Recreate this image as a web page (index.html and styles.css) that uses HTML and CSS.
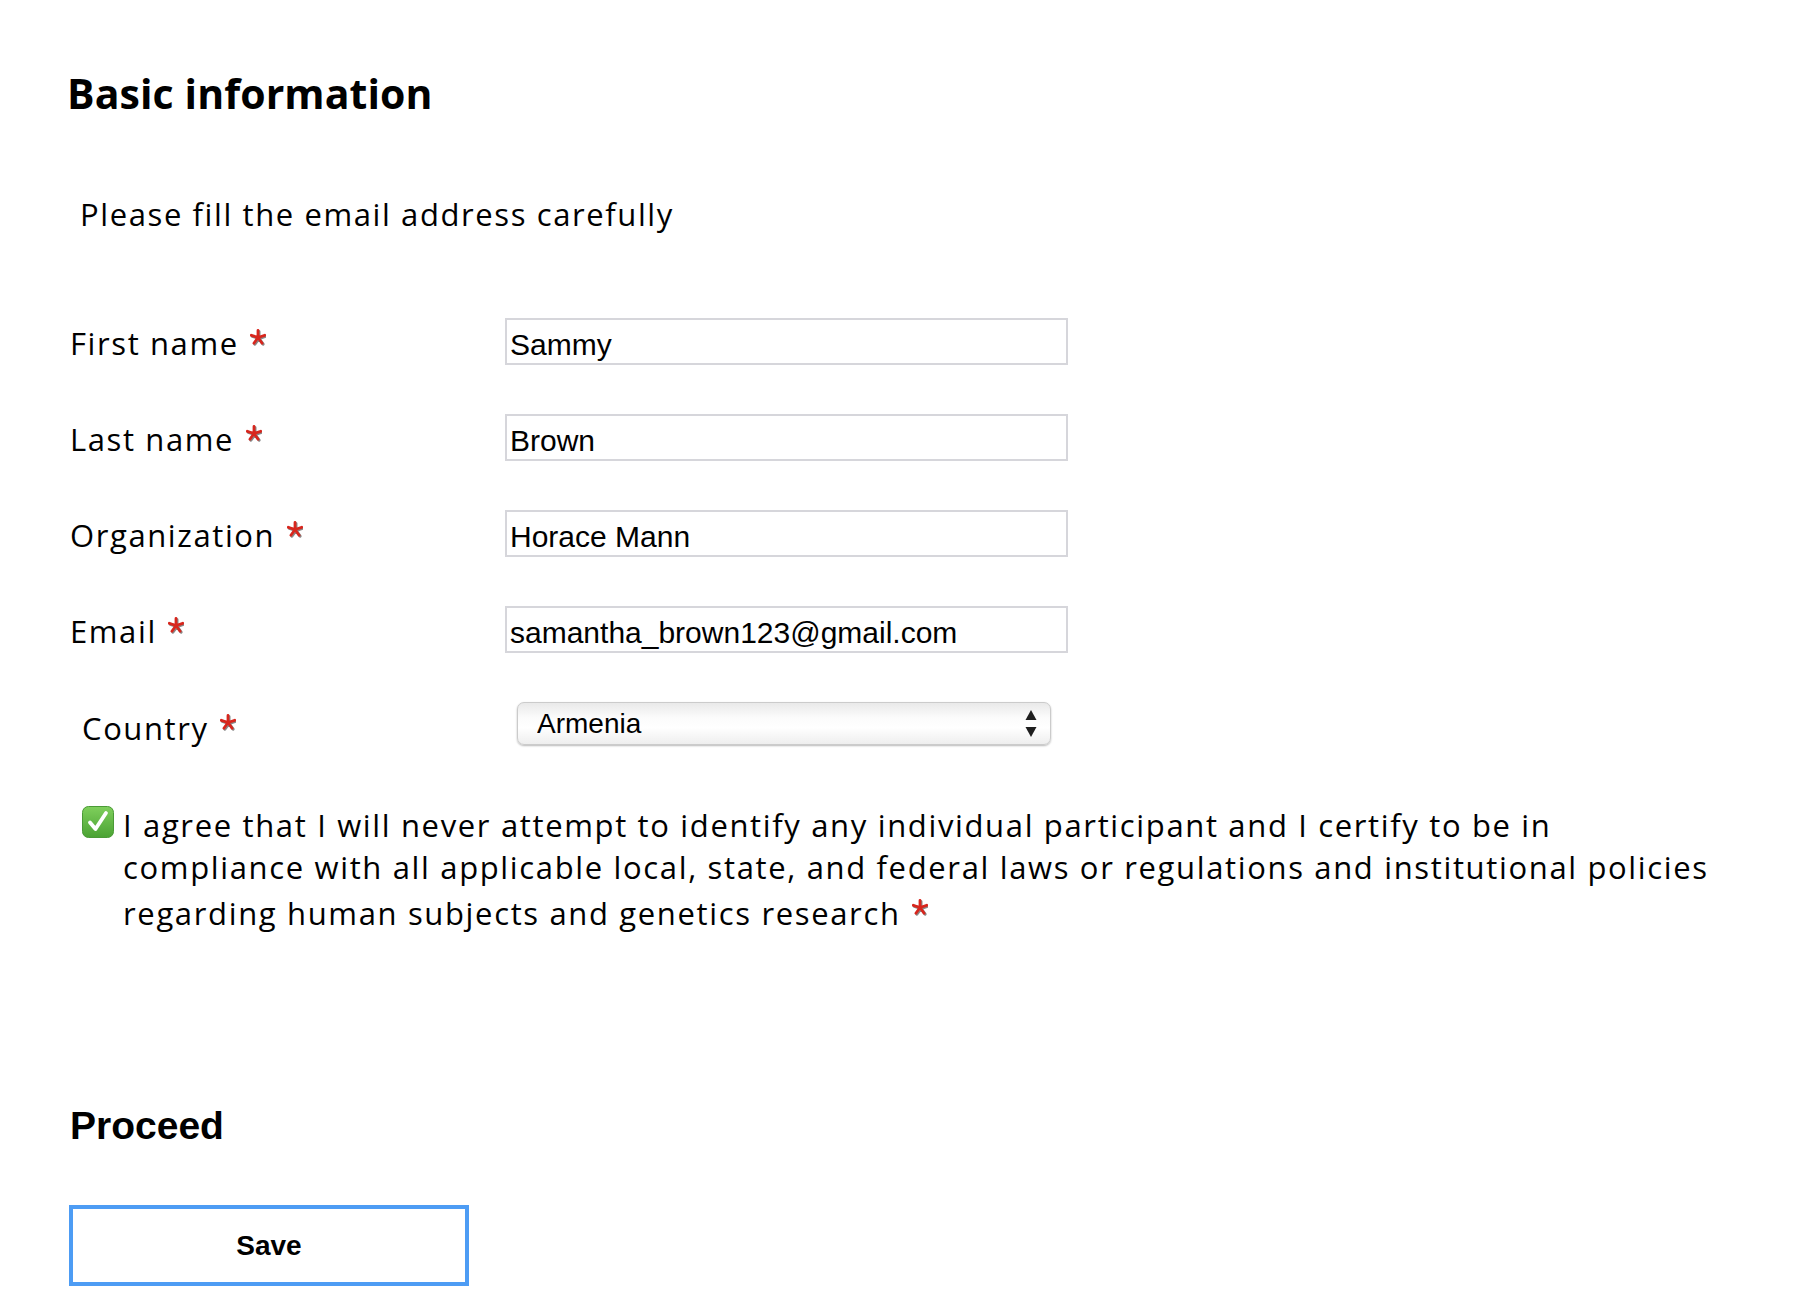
FILE: index.html
```html
<!DOCTYPE html>
<html lang="en">
<head>
<meta charset="utf-8">
<title>Basic information</title>
<link rel="stylesheet" href="styles.css">
</head>
<body>
<main class="page">
  <h1 class="title">Basic information</h1>
  <p class="note">Please fill the email address carefully</p>
  <form class="form">
    <div class="row">
      <label class="label" for="fn">First name <svg class="req" viewBox="0 0 16 37" width="16" height="37"><path class="req-shadow" d="M8 19.5L8 12.5M8 19.5L14.7 17.3M8 19.5L12.1 25.2M8 19.5L3.9 25.2M8 19.5L1.3 17.3"/><path class="req-star" d="M8 19.5L8 12.5M8 19.5L14.7 17.3M8 19.5L12.1 25.2M8 19.5L3.9 25.2M8 19.5L1.3 17.3"/></svg></label>
      <input class="field" id="fn" type="text" value="Sammy">
    </div>
    <div class="row">
      <label class="label" for="ln">Last name <svg class="req" viewBox="0 0 16 37" width="16" height="37"><path class="req-shadow" d="M8 19.5L8 12.5M8 19.5L14.7 17.3M8 19.5L12.1 25.2M8 19.5L3.9 25.2M8 19.5L1.3 17.3"/><path class="req-star" d="M8 19.5L8 12.5M8 19.5L14.7 17.3M8 19.5L12.1 25.2M8 19.5L3.9 25.2M8 19.5L1.3 17.3"/></svg></label>
      <input class="field" id="ln" type="text" value="Brown">
    </div>
    <div class="row">
      <label class="label" for="org">Organization <svg class="req" viewBox="0 0 16 37" width="16" height="37"><path class="req-shadow" d="M8 19.5L8 12.5M8 19.5L14.7 17.3M8 19.5L12.1 25.2M8 19.5L3.9 25.2M8 19.5L1.3 17.3"/><path class="req-star" d="M8 19.5L8 12.5M8 19.5L14.7 17.3M8 19.5L12.1 25.2M8 19.5L3.9 25.2M8 19.5L1.3 17.3"/></svg></label>
      <input class="field" id="org" type="text" value="Horace Mann">
    </div>
    <div class="row">
      <label class="label" for="em">Email <svg class="req" viewBox="0 0 16 37" width="16" height="37"><path class="req-shadow" d="M8 19.5L8 12.5M8 19.5L14.7 17.3M8 19.5L12.1 25.2M8 19.5L3.9 25.2M8 19.5L1.3 17.3"/><path class="req-star" d="M8 19.5L8 12.5M8 19.5L14.7 17.3M8 19.5L12.1 25.2M8 19.5L3.9 25.2M8 19.5L1.3 17.3"/></svg></label>
      <input class="field" id="em" type="text" value="samantha_brown123@gmail.com">
    </div>
    <div class="row row-select">
      <label class="label label-indent" for="ct">Country <svg class="req" viewBox="0 0 16 37" width="16" height="37"><path class="req-shadow" d="M8 19.5L8 12.5M8 19.5L14.7 17.3M8 19.5L12.1 25.2M8 19.5L3.9 25.2M8 19.5L1.3 17.3"/><path class="req-star" d="M8 19.5L8 12.5M8 19.5L14.7 17.3M8 19.5L12.1 25.2M8 19.5L3.9 25.2M8 19.5L1.3 17.3"/></svg></label>
      <div class="select-wrap">
        <select class="select" id="ct"><option>Armenia</option></select>
        <svg class="arrows" viewBox="0 0 14 29" width="14" height="29"><path d="M7 1L12.5 11H1.5Z"/><path d="M7 28L12.5 18H1.5Z"/></svg>
      </div>
    </div>
    <div class="agree">
      <span class="check"><svg viewBox="0 0 32 32" width="32" height="32"><defs><linearGradient id="g" x1="0" y1="0" x2="0" y2="1"><stop offset="0" stop-color="#7fcf5c"/><stop offset="1" stop-color="#4aa233"/></linearGradient></defs><rect x="0.5" y="0.5" width="31" height="31" rx="6" fill="url(#g)" stroke="#4a9a36"/><path d="M8 16.5L13.5 23L24 7" fill="none" stroke="#fff" stroke-width="3.8" stroke-linecap="round" stroke-linejoin="round"/></svg></span>
      <p class="agree-text">I agree that I will never attempt to identify any individual participant and I certify to be in compliance with all applicable local, state, and federal laws or regulations and institutional policies regarding human subjects and genetics research <svg class="req" viewBox="0 0 16 37" width="16" height="37"><path class="req-shadow" d="M8 19.5L8 12.5M8 19.5L14.7 17.3M8 19.5L12.1 25.2M8 19.5L3.9 25.2M8 19.5L1.3 17.3"/><path class="req-star" d="M8 19.5L8 12.5M8 19.5L14.7 17.3M8 19.5L12.1 25.2M8 19.5L3.9 25.2M8 19.5L1.3 17.3"/></svg></p>
    </div>
  </form>
  <h2 class="proceed">Proceed</h2>
  <button class="save" type="button">Save</button>
</main>
</body>
</html>
```
FILE: styles.css
```css
* {
  box-sizing: border-box;
}

body {
  margin: 0;
  background: #fff;
  color: #000;
  font-family: "Open Sans", "Noto Sans", sans-serif;
}

.page {
  padding: 65px 76px 40px 70px;
}

.title {
  margin: 0 0 0 -3px;
  font-size: 41px;
  font-weight: 700;
  line-height: normal;
  letter-spacing: 0.1px;
}

.note {
  margin: 72px 0 0 10px;
  font-size: 31px;
  line-height: 42px;
  letter-spacing: 1.6px;
}

.form {
  margin-top: 83px;
}

.row {
  display: flex;
  align-items: baseline;
  margin-bottom: 49px;
}

.label {
  flex: none;
  width: 435px;
  font-size: 31px;
  line-height: 42px;
  letter-spacing: 1.6px;
}

.req {
  vertical-align: baseline;
  margin-left: 2px;
}

.req-shadow {
  fill: none;
  stroke: #555;
  stroke-opacity: 0.7;
  stroke-width: 3;
  stroke-linecap: round;
  transform: translate(1px, 1px);
}

.req-star {
  fill: none;
  stroke: #d8261d;
  stroke-width: 2.8;
  stroke-linecap: round;
}

.field {
  flex: none;
  width: 563px;
  height: 47px;
  margin: 0;
  padding: 7px 3px 0;
  border: 2px solid #d6d6db;
  border-radius: 0;
  background: #fff;
  color: #000;
  font-family: "Liberation Sans", Arial, sans-serif;
  font-size: 30px;
  outline: none;
}

.row-select {
  align-items: flex-start;
  margin-bottom: 55px;
}

.label-indent {
  padding-left: 12px;
  margin-top: 1px;
}

.select-wrap {
  position: relative;
  flex: none;
  width: 534px;
  height: 43px;
  margin-left: 12px;
}

.select {
  -webkit-appearance: none;
  appearance: none;
  width: 100%;
  height: 100%;
  margin: 0;
  padding: 0 40px 0 19px;
  border: 1px solid #cbcbcb;
  border-radius: 7px;
  background: linear-gradient(to bottom, #e9e9e9 0%, #fbfbfb 35%, #ffffff 60%, #eeeeee 100%);
  box-shadow: 0 1px 2px rgba(0, 0, 0, 0.28);
  color: #000;
  font-family: "Liberation Sans", Arial, sans-serif;
  font-size: 28px;
  outline: none;
}

.arrows {
  position: absolute;
  right: 13px;
  top: 7px;
  fill: #1e1e1e;
  pointer-events: none;
}

.agree {
  display: flex;
  align-items: flex-start;
  padding-left: 12px;
}

.check {
  flex: none;
  width: 32px;
  height: 32px;
  margin: 2px 9px 0 0;
}

.check svg {
  display: block;
}

.agree-text {
  flex: 1;
  margin: 0;
  font-size: 31px;
  line-height: 42px;
  letter-spacing: 1.65px;
}

.proceed {
  margin: 170px 0 0 0;
  font-family: "Liberation Sans", Arial, sans-serif;
  font-size: 39px;
  font-weight: 700;
  line-height: normal;
}

.save {
  display: block;
  width: 400px;
  height: 81px;
  margin: 57px 0 0 -1px;
  padding: 0;
  border: 4px solid #4d9cf4;
  border-radius: 0;
  background: #fff;
  color: #000;
  font-family: "Liberation Sans", Arial, sans-serif;
  font-size: 28px;
  font-weight: 700;
}
```
